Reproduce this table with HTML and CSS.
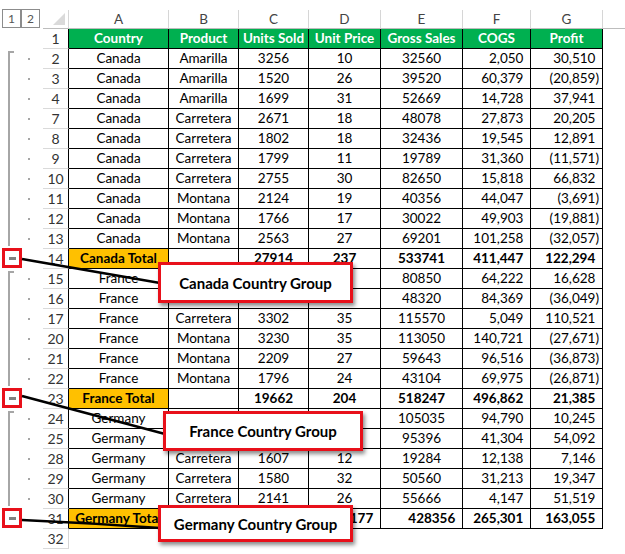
FILE: index.html
```html
<!DOCTYPE html>
<html>
<head>
<meta charset="utf-8">
<title>Outline groups</title>
<link rel="stylesheet" href="styles.css">
</head>
<body>
<div class="sheet">
  <div class="row colhead">
    <div class="g levels"><span class="lvl">1</span><span class="lvl">2</span></div>
    <div class="corner"><svg class="tri" width="25" height="18" viewBox="0 0 25 18"><polygon points="22,3 22,15 10,15" fill="#dadada"/></svg></div>
    <div class="ch">A</div><div class="ch">B</div><div class="ch">C</div><div class="ch">D</div><div class="ch">E</div><div class="ch">F</div><div class="ch">G</div><div class="ch rest"></div>
  </div>

  <div class="row hdr">
    <div class="g"></div><div class="rh">1</div>
    <div class="c">Country</div><div class="c">Product</div><div class="c">Units Sold</div><div class="c">Unit Price</div><div class="c">Gross Sales</div><div class="c">COGS</div><div class="c">Profit</div>
  </div>

  <div class="row"><div class="g"><span class="bar first"></span><span class="dot"></span></div><div class="rh">2</div>
    <div class="c">Canada</div><div class="c">Amarilla</div><div class="c">3256</div><div class="c">10</div><div class="c">32560</div><div class="c r p">2,050</div><div class="c r p">30,510</div></div>
  <div class="row"><div class="g"><span class="bar"></span><span class="dot"></span></div><div class="rh">3</div>
    <div class="c">Canada</div><div class="c">Amarilla</div><div class="c">1520</div><div class="c">26</div><div class="c">39520</div><div class="c r p">60,379</div><div class="c r">(20,859)</div></div>
  <div class="row"><div class="g"><span class="bar"></span><span class="dot"></span></div><div class="rh">4</div>
    <div class="c">Canada</div><div class="c">Amarilla</div><div class="c">1699</div><div class="c">31</div><div class="c">52669</div><div class="c r p">14,728</div><div class="c r p">37,941</div></div>
  <div class="row"><div class="g"><span class="bar"></span><span class="dot"></span></div><div class="rh">7</div>
    <div class="c">Canada</div><div class="c">Carretera</div><div class="c">2671</div><div class="c">18</div><div class="c">48078</div><div class="c r p">27,873</div><div class="c r p">20,205</div></div>
  <div class="row"><div class="g"><span class="bar"></span><span class="dot"></span></div><div class="rh">8</div>
    <div class="c">Canada</div><div class="c">Carretera</div><div class="c">1802</div><div class="c">18</div><div class="c">32436</div><div class="c r p">19,545</div><div class="c r p">12,891</div></div>
  <div class="row"><div class="g"><span class="bar"></span><span class="dot"></span></div><div class="rh">9</div>
    <div class="c">Canada</div><div class="c">Carretera</div><div class="c">1799</div><div class="c">11</div><div class="c">19789</div><div class="c r p">31,360</div><div class="c r">(11,571)</div></div>
  <div class="row"><div class="g"><span class="bar"></span><span class="dot"></span></div><div class="rh">10</div>
    <div class="c">Canada</div><div class="c">Carretera</div><div class="c">2755</div><div class="c">30</div><div class="c">82650</div><div class="c r p">15,818</div><div class="c r p">66,832</div></div>
  <div class="row"><div class="g"><span class="bar"></span><span class="dot"></span></div><div class="rh">11</div>
    <div class="c">Canada</div><div class="c">Montana</div><div class="c">2124</div><div class="c">19</div><div class="c">40356</div><div class="c r p">44,047</div><div class="c r">(3,691)</div></div>
  <div class="row"><div class="g"><span class="bar"></span><span class="dot"></span></div><div class="rh">12</div>
    <div class="c">Canada</div><div class="c">Montana</div><div class="c">1766</div><div class="c">17</div><div class="c">30022</div><div class="c r p">49,903</div><div class="c r">(19,881)</div></div>
  <div class="row"><div class="g"><span class="bar last"></span><span class="dot"></span></div><div class="rh">13</div>
    <div class="c">Canada</div><div class="c">Montana</div><div class="c">2563</div><div class="c">27</div><div class="c">69201</div><div class="c r p">101,258</div><div class="c r">(32,057)</div></div>
  <div class="row tot"><div class="g"><span class="minus"></span></div><div class="rh">14</div>
    <div class="c or">Canada Total</div><div class="c"></div><div class="c">27914</div><div class="c">237</div><div class="c">533741</div><div class="c r p">411,447</div><div class="c r p">122,294</div></div>

  <div class="row"><div class="g"><span class="bar first"></span><span class="dot"></span></div><div class="rh">15</div>
    <div class="c">France</div><div class="c">Carretera</div><div class="c">3234</div><div class="c">25</div><div class="c">80850</div><div class="c r p">64,222</div><div class="c r p">16,628</div></div>
  <div class="row"><div class="g"><span class="bar"></span><span class="dot"></span></div><div class="rh">16</div>
    <div class="c">France</div><div class="c">Carretera</div><div class="c">2416</div><div class="c">20</div><div class="c">48320</div><div class="c r p">84,369</div><div class="c r">(36,049)</div></div>
  <div class="row"><div class="g"><span class="bar"></span><span class="dot"></span></div><div class="rh">17</div>
    <div class="c">France</div><div class="c">Carretera</div><div class="c">3302</div><div class="c">35</div><div class="c">115570</div><div class="c r p">5,049</div><div class="c r p">110,521</div></div>
  <div class="row"><div class="g"><span class="bar"></span><span class="dot"></span></div><div class="rh">20</div>
    <div class="c">France</div><div class="c">Montana</div><div class="c">3230</div><div class="c">35</div><div class="c">113050</div><div class="c r p">140,721</div><div class="c r">(27,671)</div></div>
  <div class="row"><div class="g"><span class="bar"></span><span class="dot"></span></div><div class="rh">21</div>
    <div class="c">France</div><div class="c">Montana</div><div class="c">2209</div><div class="c">27</div><div class="c">59643</div><div class="c r p">96,516</div><div class="c r">(36,873)</div></div>
  <div class="row"><div class="g"><span class="bar last"></span><span class="dot"></span></div><div class="rh">22</div>
    <div class="c">France</div><div class="c">Montana</div><div class="c">1796</div><div class="c">24</div><div class="c">43104</div><div class="c r p">69,975</div><div class="c r">(26,871)</div></div>
  <div class="row tot"><div class="g"><span class="minus"></span></div><div class="rh">23</div>
    <div class="c or">France Total</div><div class="c"></div><div class="c">19662</div><div class="c">204</div><div class="c">518247</div><div class="c r p">496,862</div><div class="c r p">21,385</div></div>

  <div class="row"><div class="g"><span class="bar first"></span><span class="dot"></span></div><div class="rh">24</div>
    <div class="c">Germany</div><div class="c">Amarilla</div><div class="c">4201</div><div class="c">25</div><div class="c">105035</div><div class="c r p">94,790</div><div class="c r p">10,245</div></div>
  <div class="row"><div class="g"><span class="bar"></span><span class="dot"></span></div><div class="rh">25</div>
    <div class="c">Germany</div><div class="c">Amarilla</div><div class="c">2939</div><div class="c">32</div><div class="c">95396</div><div class="c r p">41,304</div><div class="c r p">54,092</div></div>
  <div class="row"><div class="g"><span class="bar"></span><span class="dot"></span></div><div class="rh">28</div>
    <div class="c">Germany</div><div class="c">Carretera</div><div class="c">1607</div><div class="c">12</div><div class="c">19284</div><div class="c r p">12,138</div><div class="c r p">7,146</div></div>
  <div class="row"><div class="g"><span class="bar"></span><span class="dot"></span></div><div class="rh">29</div>
    <div class="c">Germany</div><div class="c">Carretera</div><div class="c">1580</div><div class="c">32</div><div class="c">50560</div><div class="c r p">31,213</div><div class="c r p">19,347</div></div>
  <div class="row"><div class="g"><span class="bar last"></span><span class="dot"></span></div><div class="rh">30</div>
    <div class="c">Germany</div><div class="c">Carretera</div><div class="c">2141</div><div class="c">26</div><div class="c">55666</div><div class="c r p">4,147</div><div class="c r p">51,519</div></div>
  <div class="row tot"><div class="g"><span class="minus"></span></div><div class="rh">31</div>
    <div class="c or">Germany Total</div><div class="c"></div><div class="c">12468</div><div class="c r p">177</div><div class="c r p">428356</div><div class="c r p">265,301</div><div class="c r p">163,055</div></div>

  <div class="row empty"><div class="g"></div><div class="rh">32</div></div>
</div>

<svg class="leaders" width="625" height="554" viewBox="0 0 625 554">
  <line x1="22" y1="259" x2="160" y2="283" />
  <line x1="22" y1="396" x2="165" y2="434" />
  <path d="M22 520 Q90 523 160 528" fill="none" />
</svg>

<div class="callout c1">Canada Country Group</div>
<div class="callout c2">France Country Group</div>
<div class="callout c3">Germany Country Group</div>
</body>
</html>
```

FILE: styles.css
```css
* { box-sizing: border-box; }
html, body { margin: 0; background: #fff; }
body {
  font-family: Lato, "Liberation Sans", sans-serif;
  font-size: 13.5px;
  color: #000;
  width: 625px;
  height: 554px;
  overflow: hidden;
  position: relative;
}
.sheet { padding-top: 10px; }
.row {
  display: grid;
  grid-template-columns: 43px 26px 100px 70px 70px 72px 82px 68px 72px 1fr;
  height: 20px;
}
.colhead { height: 19px; }
.ch {
  border-right: 1px solid #d6d6d6;
  border-bottom: 1px solid #bdbdbd;
  text-align: center;
  color: #444;
  line-height: 18px;
}
.ch.rest { border-right: 0; }
.corner {
  border-right: 1px solid #d6d6d6;
  border-bottom: 1px solid #bdbdbd;
}
.tri { display: block; }
.levels {
  display: flex;
  gap: 0;
  padding-left: 2px;
  margin-top: -1px;
}
.lvl {
  width: 19px;
  height: 19px;
  border: 1px solid #8c8c8c;
  color: #555;
  font-size: 12px;
  line-height: 17px;
  text-align: center;
}
.rh {
  border-right: 1px solid #000;
  border-bottom: 1px solid #dadada;
  text-align: center;
  color: #333;
  line-height: 19px;
  font-size: 14px;
}
.empty .rh { border-right-color: #d6d6d6; }
.c {
  border-right: 1px solid #000;
  border-bottom: 1px solid #000;
  text-align: center;
  line-height: 19px;
  white-space: nowrap;
  overflow: hidden;
}
.c.r { text-align: right; padding-right: 3px; }
.c.p::after { content: ")"; visibility: hidden; }
.hdr .c { background: #00b050; color: #fff; font-weight: 700; }
.tot .c { font-weight: 700; }
.c.or { background: #ffc000; overflow: visible; }

.g { display: flex; align-items: stretch; }
.bar {
  width: 6px;
  margin-left: 8px;
  border-left: 2px solid #a6a6a6;
}
.bar.first { margin-top: 2px; border-top: 2px solid #a6a6a6; }
.bar.last { margin-bottom: 3px; }
.dot {
  width: 2px;
  height: 2px;
  background: #a6a6a6;
  align-self: center;
  margin-left: 14px;
}
.minus {
  width: 20px;
  height: 20px;
  margin: -1px 0 0 2px;
  border: 3px solid #e8101a;
  display: flex;
  align-items: center;
  justify-content: center;
}
.minus::before {
  content: "";
  width: 7px;
  height: 3px;
  background: #808080;
}

.leaders {
  position: absolute;
  left: 0;
  top: 0;
  pointer-events: none;
}
.leaders line, .leaders path { stroke: #000; stroke-width: 2.6; }

.callout {
  position: absolute;
  background: #fff;
  border: 3px solid #e8101a;
  box-shadow: 2px 3px 4px rgba(0, 0, 0, 0.45);
  font-weight: 700;
  font-size: 15px;
  display: flex;
  align-items: center;
  justify-content: center;
}
.c1 { left: 158px; top: 262px; width: 195px; height: 41px; }
.c2 { left: 163px; top: 411px; width: 200px; height: 40px; }
.c3 { left: 158px; top: 505px; width: 195px; height: 37px; }
```
